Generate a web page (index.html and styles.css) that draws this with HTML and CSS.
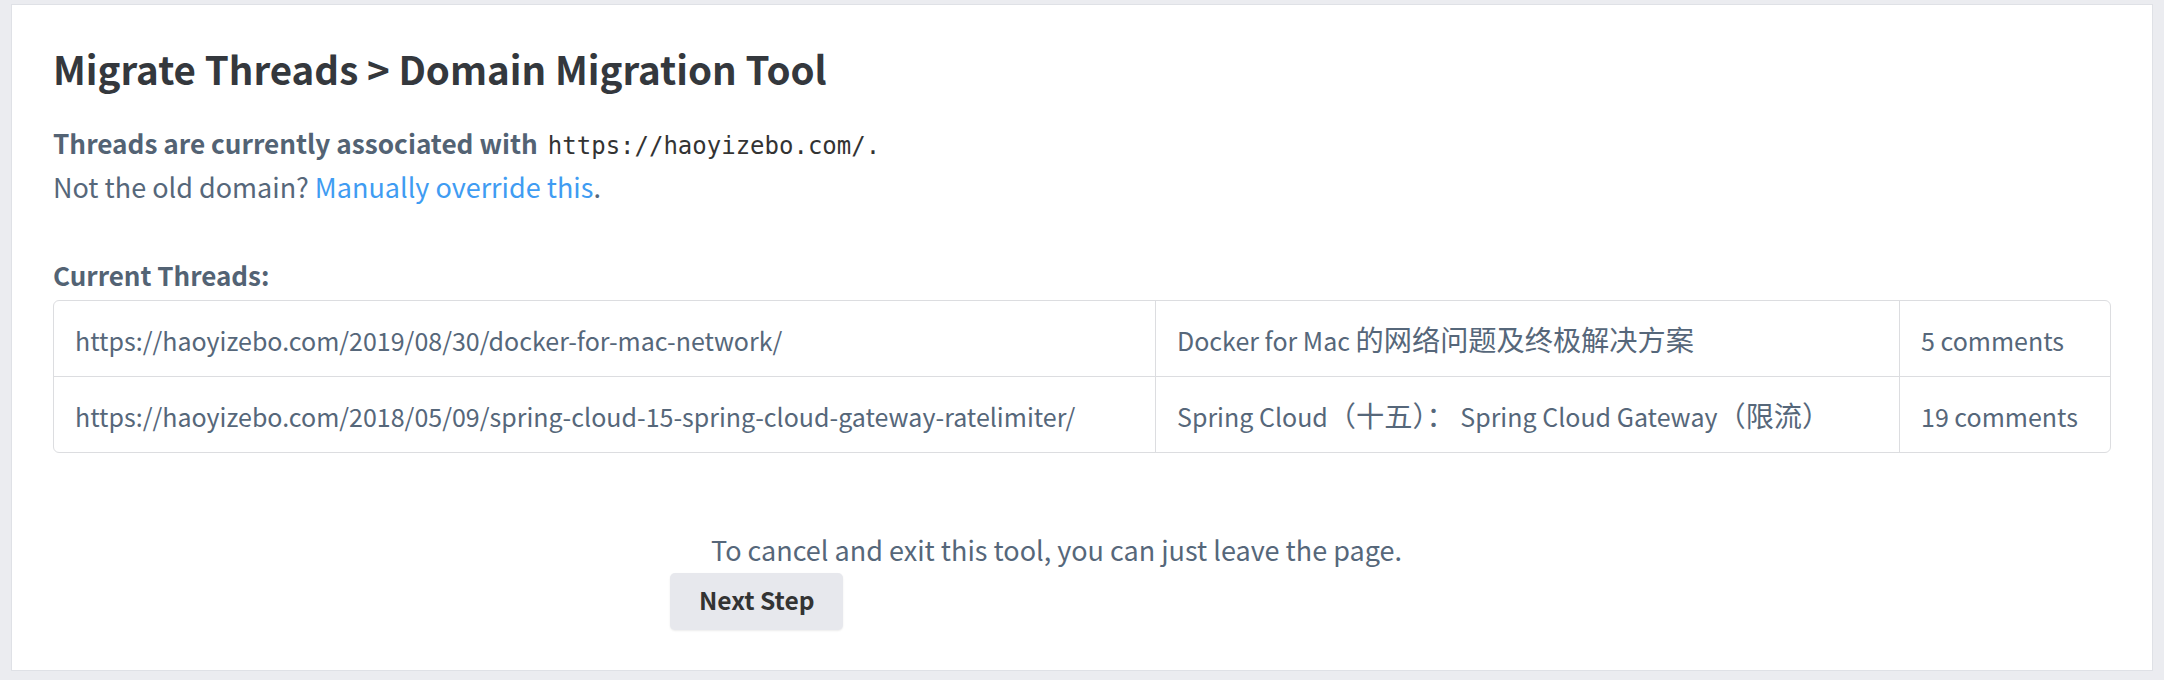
FILE: index.html
```html
<!DOCTYPE html>
<html lang="en">
<head>
<meta charset="utf-8">
<title>Migrate Threads</title>
<link rel="stylesheet" href="styles.css">
</head>
<body>
<main class="card">
  <h1 class="title">Migrate Threads &gt; Domain Migration Tool</h1>
  <div class="intro">
    <p class="assoc"><strong>Threads are currently associated with</strong> <code class="domain">https://haoyizebo.com/.</code></p>
    <p class="note">Not the old domain? <a href="#" class="link">Manually override this</a>.</p>
  </div>
  <h2 class="label">Current Threads:</h2>
  <table class="threads">
    <colgroup>
      <col class="c-url">
      <col class="c-title">
      <col class="c-count">
    </colgroup>
    <tbody>
      <tr>
        <td>https://haoyizebo.com/2019/08/30/docker-for-mac-network/</td>
        <td>Docker for Mac <span class="cjk">的网络问题及终极解决方案</span></td>
        <td>5 comments</td>
      </tr>
      <tr>
        <td>https://haoyizebo.com/2018/05/09/spring-cloud-15-spring-cloud-gateway-ratelimiter/</td>
        <td>Spring Cloud<span class="cjk">（十五）：</span> Spring Cloud Gateway<span class="cjk">（限流）</span></td>
        <td>19 comments</td>
      </tr>
    </tbody>
  </table>
  <div class="actions">
    <p class="cancel">To cancel and exit this tool, you can just leave the page.</p>
    <button class="btn" type="button">Next Step</button>
  </div>
</main>
</body>
</html>
```

FILE: styles.css
```css
html, body {
  margin: 0;
  padding: 0;
}
body {
  background: #ebecf0;
  padding: 4px 11px 8px 11px;
  font-family: "Noto Sans CJK SC", "Source Sans Pro", "Lato", sans-serif;
  font-size: 27px;
  line-height: 44px;
  color: #56677a;
}
.card {
  display: block;
  background: #ffffff;
  border: 1px solid #dfe1e6;
  padding: 37px 41px 40px 41px;
}
.title {
  margin: 0;
  font-size: 38.5px;
  line-height: 52px;
  font-weight: 700;
  color: #34383d;
}
.intro {
  margin-top: 27px;
}
.intro p {
  margin: 0;
}
.assoc strong {
  font-size: 26.2px;
  font-weight: 700;
  color: #536374;
}
.domain {
  font-family: "DejaVu Sans Mono", "Liberation Mono", monospace;
  font-size: 24px;
  line-height: 24px;
  margin-left: 4px;
  color: #333333;
}
.link {
  color: #3f9cf2;
  text-decoration: none;
}
.label {
  margin: 44px 0 3px 0;
  font-size: 26px;
  line-height: 44px;
  font-weight: 700;
  color: #536374;
}
.threads {
  width: 100%;
  table-layout: fixed;
  border-collapse: separate;
  border-spacing: 0;
  border: 1px solid #dcdde0;
  border-radius: 6px;
}
.c-url { width: 1102px; }
.c-title { width: 744px; }
.threads td {
  padding: 17px 10px 14px 21px;
  font-size: 25px;
  line-height: 44px;
  white-space: nowrap;
  border-right: 1px solid #dcdde0;
  border-bottom: 1px solid #dcdde0;
  color: #56677a;
}
.threads td:last-child {
  border-right: none;
}
.threads tr:last-child td {
  border-bottom: none;
}
.cjk {
  font-size: 28.2px;
  line-height: 40px;
}
.actions {
  margin-top: 75px;
  padding-left: 617px;
}
.cancel {
  margin: 0 0 1px 41px;
  line-height: 44px;
}
.btn {
  display: block;
  height: 57px;
  padding: 7px 29px 10px 29px;
  border: none;
  border-radius: 5px;
  background: #e7e8ed;
  box-shadow: 0 1px 2px rgba(0, 0, 0, 0.08);
  font-family: "Noto Sans CJK SC", "Source Sans Pro", "Lato", sans-serif;
  font-size: 24.5px;
  line-height: 40px;
  font-weight: 700;
  color: #333333;
}
```
